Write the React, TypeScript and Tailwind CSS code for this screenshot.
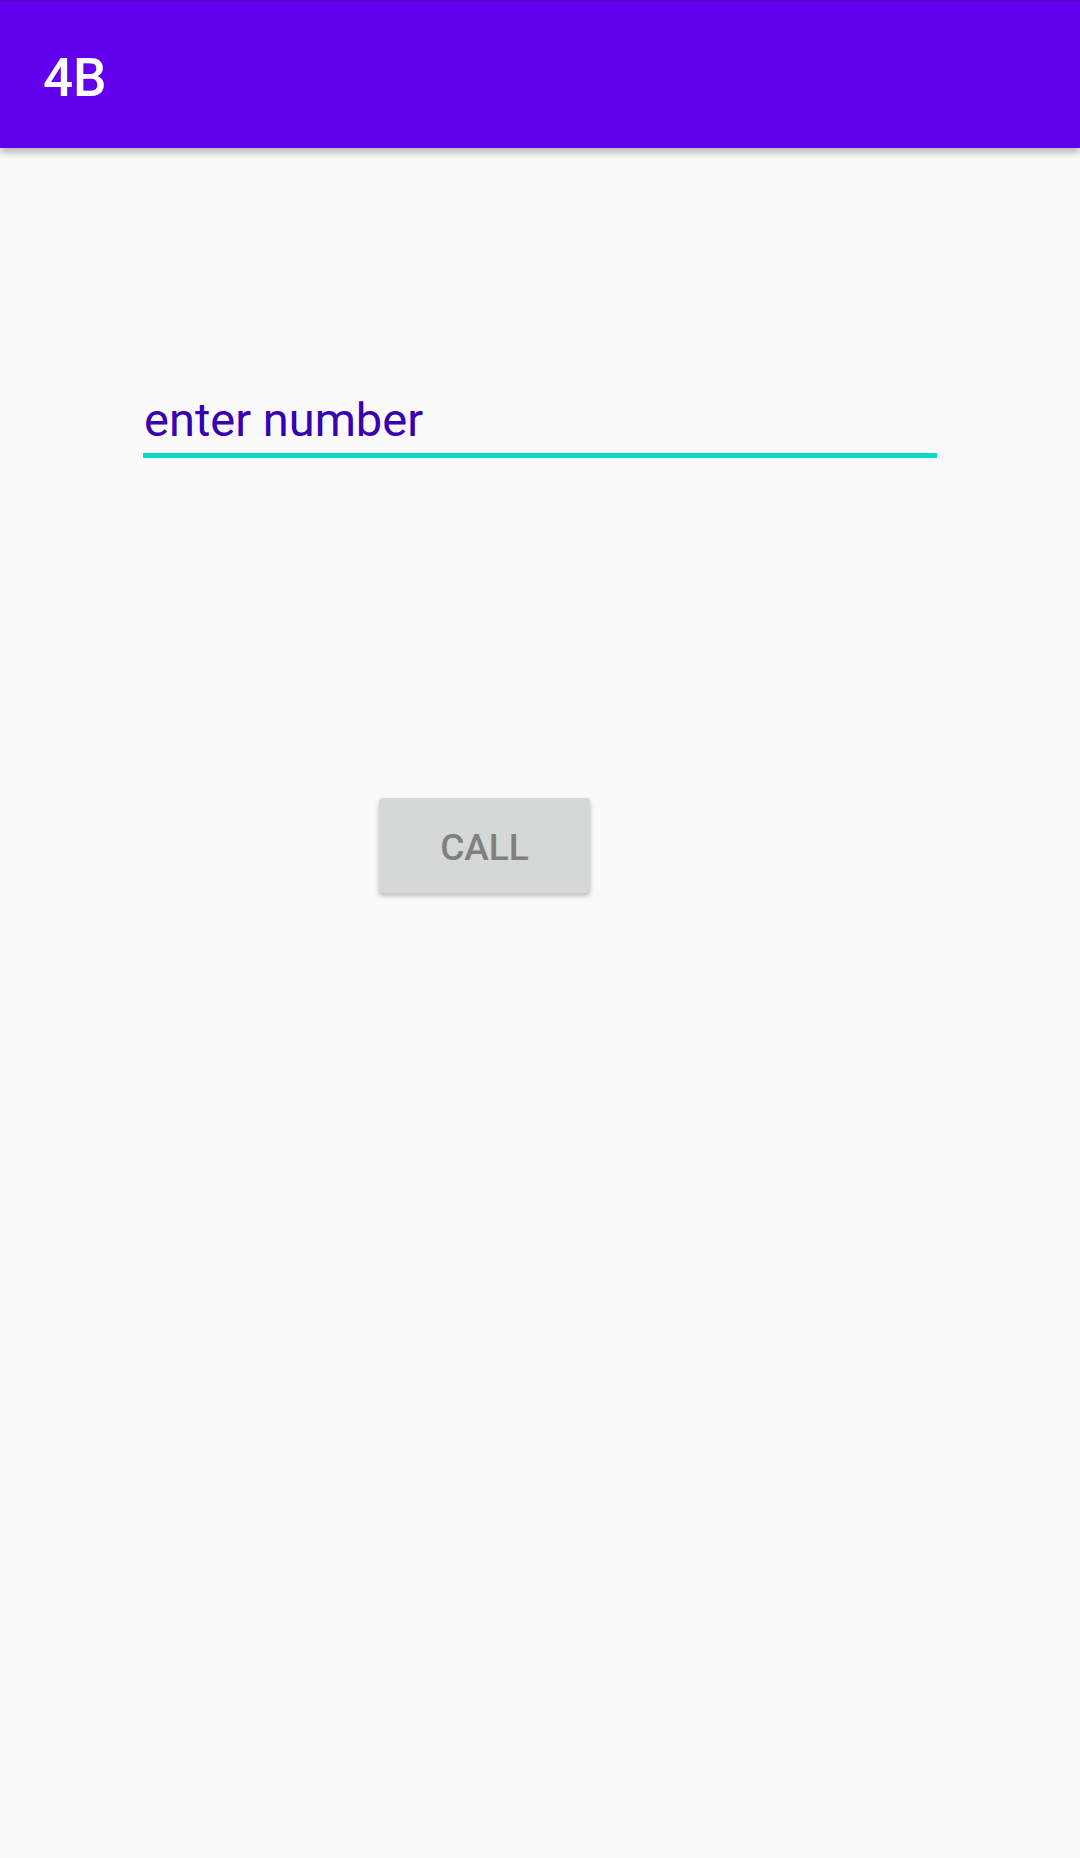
import React from 'react'

const App = () => {
  return (
    <div className="w-[1080px] h-[1858px] bg-[#fafafa] flex flex-col" style={{ fontFamily: 'Roboto, "Liberation Sans", sans-serif' }}>
      <div className="h-[148px] w-full bg-[#6200ee] border-t-2 border-[#5000d0] flex items-center pl-[43px] shadow-[0_4px_8px_rgba(0,0,0,0.3)] z-10">
        <span className="text-white text-[53px] font-medium leading-none pt-[6px]">4B</span>
      </div>
      <div className="flex flex-col pl-[143px]">
        <div className="mt-[242px] w-[794px] flex flex-col">
          <span className="text-[#3700b3] text-[47px] leading-[60px] pl-[1px]">enter number</span>
          <div className="mt-[3px] h-[5px] bg-[#03dac5]"></div>
        </div>
        <div className="ml-[236px] mt-[340px] w-[211px] h-[95px] bg-[#d6d7d7] rounded-[4px] flex items-center justify-center shadow-[0_3px_5px_rgba(0,0,0,0.25)]">
          <span className="text-[#808080] text-[37px] font-medium pt-[5px]">CALL</span>
        </div>
      </div>
    </div>
  )
}

export default App
